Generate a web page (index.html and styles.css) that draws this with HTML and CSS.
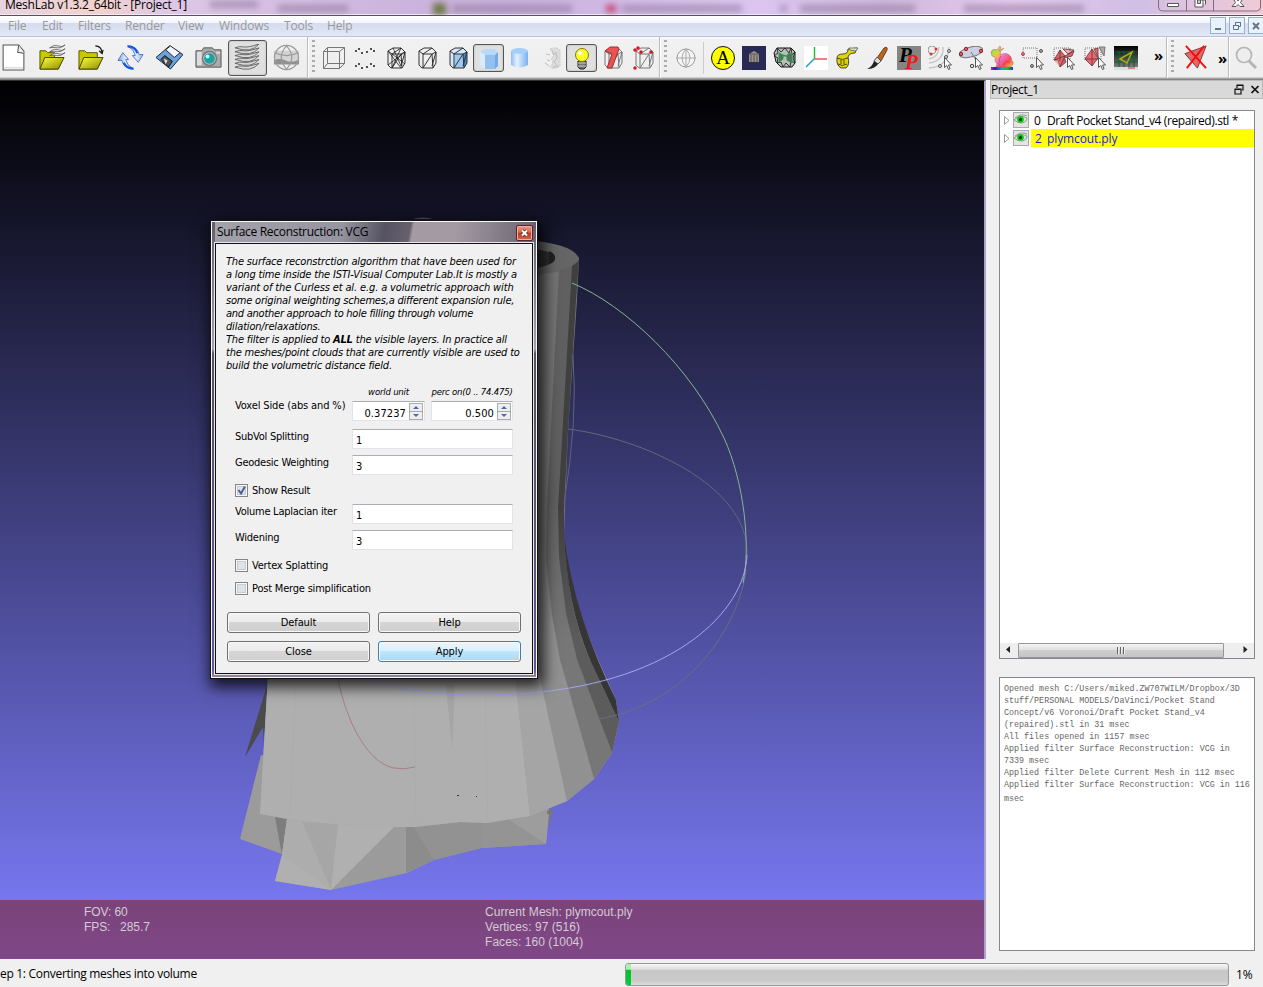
FILE: index.html
```html
<!DOCTYPE html>
<html lang="en">
<head>
<meta charset="utf-8">
<title>MeshLab</title>
<link rel="stylesheet" href="styles.css">
</head>
<body>
<svg class="defs" width="0" height="0">
  <defs>
    <linearGradient id="steel" x2="1"><stop offset="0" stop-color="#7ba6e6"/><stop offset=".5" stop-color="#e4efff"/><stop offset="1" stop-color="#9fc1ee"/></linearGradient>
    <linearGradient id="folder" x2="1" y2="1"><stop offset="0" stop-color="#ffff40"/><stop offset="1" stop-color="#8c8c00"/></linearGradient>
    <linearGradient id="cyl" x2="1"><stop offset="0" stop-color="#8dbdf5"/><stop offset=".35" stop-color="#e2f1ff"/><stop offset="1" stop-color="#7ab0ee"/></linearGradient>
    <linearGradient id="rainbow" x2="1" y2="1"><stop offset="0" stop-color="#35e45f"/><stop offset=".22" stop-color="#b6e040"/><stop offset=".36" stop-color="#f6c040"/><stop offset=".52" stop-color="#f070d0"/><stop offset=".75" stop-color="#ff4b4b"/><stop offset="1" stop-color="#f0e03b"/></linearGradient>
    <linearGradient id="spectrum" x2="1"><stop offset="0" stop-color="#e01090"/><stop offset=".2" stop-color="#2020e0"/><stop offset=".5" stop-color="#10b0c0"/><stop offset=".75" stop-color="#20c020"/><stop offset="1" stop-color="#2030d0"/></linearGradient>
    <symbol id="prism" viewBox="0 0 24 24"><path d="M4 5l5-3h8l4 4v11l-3 5H7l-3-3zM4 5l4 3h9l4-2M8 8v14M17 8l1 14M8 22l9-14M8 8l9-6M17 20l4-14" fill="none" stroke="currentColor"/></symbol>
    <symbol id="cursor" viewBox="0 0 8 13"><path d="M.5.5v10l2.300-2 1.700 4 1.600-.8-1.600-3.700h3z" fill="#fff" stroke="#444" stroke-width=".9"/></symbol>
    <symbol id="eye" viewBox="0 0 16 16"><rect x=".5" y=".5" width="15" height="15" fill="#e4e4e4" stroke="#aaa"/><path d="M2 6Q8 1 14 4M1 8q6-6 13-2 0 4-5 5-5 0-8-3z" fill="#c9efc9" stroke="#888" stroke-width=".8"/><circle cx="7.500" cy="7.500" r="3.300" fill="#08c808"/><circle cx="7.500" cy="7.500" r="1.500" fill="#052805"/></symbol>
  </defs>
</svg>
<div class="window">
  <header class="titlebar">
    <div class="smudges"><i class="s1"></i><i class="s2"></i><i class="s3"></i><i class="s4"></i><i class="s5"></i><i class="s6"></i><i class="s7"></i><i class="s8"></i><i class="s9"></i></div>
    <span class="title">MeshLab v1.3.2_64bit - [Project_1]</span>
    <div class="caption">
      <svg width="104" height="12" viewBox="0 0 104 12"><path d="M.5 0v7q0 4 4 4h94q4 0 4-4V0M28.500 0v11M55.500 0v11" fill="none" stroke="#806b80"/><path d="M9.500 3.500h11v3h-11z" fill="#fff" stroke="#555"/><path d="M38.500 -1h6.500v8h-8v-8M40 0h7.500v4.500M39.500 0v3.500h3V0" fill="#fff" stroke="#555"/><path d="M74 6.500l3.500-4-2-3.500h3l1.500 2 1.500-2h3l-2 3.500 3.500 4h-4l-2-2-2 2z" fill="#fff" stroke="#555"/></svg>
    </div>
  </header>
  <nav class="menubar">
    <span class="m1">File</span><span class="m2">Edit</span><span class="m3">Filters</span><span class="m4">Render</span><span class="m5">View</span><span class="m6">Windows</span><span class="m7">Tools</span><span class="m8">Help</span>
    <div class="mdi">
      <svg viewBox="0 0 17 18"><rect x=".5" y=".5" width="15" height="16"/><path d="M5 12h6" stroke-width="2"/></svg>
      <svg viewBox="0 0 17 18"><rect x=".5" y=".5" width="15" height="16"/><path d="M4.500 8.500h5v4h-5zM6.500 8V5.500h5v4H10M4 8.500h6M6 5.500h6"/></svg>
      <svg viewBox="0 0 17 18"><rect x=".5" y=".5" width="15" height="16"/><path d="M5 6l6 6M11 6l-6 6" stroke-width="2"/></svg>
    </div>
  </nav>
  <div class="toolbar">
    <div class="group wide">
      <div class="tool"><svg viewBox="0 0 26 26"><path d="M3 1h15l5 6v18H3z" fill="#fff" stroke="#555"/><path d="M18 1l-1 7 6 1" fill="#eee" stroke="#555"/><path d="M4 23h18" stroke="#ccc"/></svg></div>
      <div class="tool"><svg viewBox="0 0 28 28"><path d="M1 26V7h6l2 2h7v5h9L20 26z" fill="#c9c900" stroke="#555500"/><path d="M1 26l5-12h20l-6 12z" fill="url(#folder)" stroke="#444400"/><path d="M11 4q5-4 9-2t7-1q-5 4-8 3t-8 0zM11 8q5-4 9-2t7-1q-5 4-8 3t-8 0zM11 12q5-4 9-2t7-1q-5 4-8 3t-8 0z" fill="#eee" stroke="#555" stroke-width=".8"/></svg></div>
      <div class="tool"><svg viewBox="0 0 28 28"><path d="M1 26V7h6l2 2h11v5h5L20 26z" fill="#c9c900" stroke="#555500"/><path d="M1 26l5-12h20l-6 12z" fill="url(#folder)" stroke="#444400"/><path d="M18 2q6 0 7 7m-3-2l3 3 1-4" fill="none" stroke="#111" stroke-width="1.200"/></svg></div>
      <div class="tool"><svg viewBox="0 0 28 28"><path d="M11 2q10 0 12 9h4l-5 8-6-7h3q-1-6-8-10z" fill="url(#steel)" stroke="#345ab8" stroke-width=".8"/><path d="M17 26Q7 26 5 17H1l5-8 6 7H9q1 6 8 10z" fill="url(#steel)" stroke="#345ab8" stroke-width=".8"/><path d="M11 2.500q8 0 10 7M17 25.500q-7 0-10-6" stroke="#1454e8" stroke-width="2.200" fill="none"/></svg></div>
      <div class="tool"><svg viewBox="0 0 28 28"><path d="M0 14L14 2l14 9-13 15z" fill="#6ba3dd" stroke="#162440"/><path d="M10 6l5-4 10 7-6 5z" fill="#f5f5f5" stroke="#223"/><path d="M5 16l4-4 8 6-4 6z" fill="#555" stroke="#111"/><path d="M8 15l4 2-2 4z" fill="#ddd"/></svg></div>
      <div class="tool"><svg viewBox="0 0 28 28"><path d="M1 7h6l2-3h9l2 2h7v18H1z" fill="#aaa" stroke="#555"/><path d="M2 8h5v14H2zM22 8h4v2h-4z" fill="#ddd"/><circle cx="15" cy="15" r="8" fill="#777"/><circle cx="15" cy="15" r="6" fill="#1da0a0" stroke="#ccc"/><circle cx="13" cy="13" r="2" fill="#b9ffff"/></svg></div>
      <div class="tool pressed-lg"><svg viewBox="0 0 28 28"><g fill="#d8d8d8" stroke="#5a5a5a" stroke-width=".9"><path d="M1 24q5-2 9-1t16-3q-4 5-10 6t-15-2z"/><path d="M1 20q5-2 9-1t16-3q-4 5-10 6t-15-2z"/><path d="M1 16q5-2 9-1t16-3q-4 5-10 6t-15-2z"/><path d="M1 12q5-2 9-1t16-3q-4 5-10 6t-15-2z"/><path d="M1 8q5-2 9-1t16-3q-4 5-10 6t-15-2z"/><path d="M1 4q5-2 9-1t16-3q-4 5-10 6t-15-2z"/></g></svg></div>
      <div class="tool"><svg viewBox="0 0 28 28"><rect x="1" y="7" width="26" height="15" fill="#d3d3d3"/><path d="M1 17q5-3 12 0t14-1v5H1z" fill="#909090"/><circle cx="14" cy="14" r="12.500" fill="none" stroke="#999" stroke-width="1.200"/><path d="M14 2q-11 12 0 24M14 2q11 12 0 24M2 9q12 6 24 0" fill="none" stroke="#999" stroke-width="1.200"/></svg></div>
    </div>
    <span class="bar"></span><span class="grip"></span>
    <div class="group render">
      <div class="tool"><svg viewBox="0 0 24 24"><path d="M1.500 5.500h16v17h-16zM5.500 1.500h17v16h-17zM1.500 5.500l4-4M17.500 5.500l5-4M17.500 22.500l5-5M1.500 22.500l4-5" fill="none" stroke="#777"/></svg></div>
      <div class="tool"><svg viewBox="0 0 24 24"><path d="M3 5h0M6 3h0M9 7h0M14 6h0M18 3h0M21 5h0M3 20h0M6 18h0M9 22h0M14 21h0M18 18h0M21 20h0" stroke="#111" stroke-width="1.900" stroke-linecap="round"/></svg></div>
      <div class="tool dark"><svg viewBox="0 0 24 24"><use href="#prism"/><path d="M4 5l13 17M9 2l8 18M21 6L4 19M8 8l13 10M17 2L8 22" stroke="#222" stroke-width=".8"/></svg></div>
      <div class="tool dark"><svg><use href="#prism"/></svg></div>
      <div class="tool dark"><svg viewBox="0 0 24 24"><path d="M4 5l5-3h8l4 4v11l-3 5H7l-3-3z" fill="#d5e7fa"/><path d="M9 8h8l1 14H8z" fill="#9cc8f5"/><path d="M17 8l4-2v11l-3 5z" fill="#4787ca"/><use href="#prism"/></svg></div>
      <div class="tool pressed"><svg viewBox="0 0 24 24"><path d="M3 6l5-3h9l4 3-3 3H8z" fill="#b9d9fa"/><path d="M3 6l5 3v14l-5-4z" fill="#dcebfb"/><path d="M8 9h10v14H8z" fill="#91c0f1"/><path d="M18 9l3-3v14l-3 3z" fill="#6eabe9"/></svg></div>
      <div class="tool"><svg viewBox="0 0 24 24"><path d="M3 5v14q8 5 17 0V5z" fill="url(#cyl)"/><ellipse cx="11.500" cy="5" rx="8.500" ry="3" fill="#a5cef8"/></svg></div>
      <div class="tool"><svg viewBox="0 0 24 24"><path d="M11 3q8-3 10 2v15q-5 4-10 1 5-5 1-8 5-3-1-10" fill="#ddd" stroke="#c6c6c6" stroke-dasharray="2 1"/><path d="M13 4l2 5 2-3 1 6-3 4 4 4-5 1M6 17l4 3M7 8l4 1M8 14l3 1" fill="none" stroke="#bdbdbd"/></svg></div>
      <div class="tool pressed"><svg viewBox="0 0 24 24"><path d="M8 15h8v6l-2 2h-4l-2-2z" fill="#777" stroke="#222"/><path d="M8 17h8M8 20h8" stroke="#ccc"/><circle cx="12" cy="9" r="6.500" fill="#ffff21" stroke="#827c00"/><circle cx="10" cy="7" r="2" fill="#fff"/></svg></div>
      <div class="tool"><svg viewBox="0 0 24 24"><g color="#777"><use href="#prism"/></g><path d="M4 5l5-4h8l1 2-7 19H6l5-14z" fill="#ec5252" stroke="#9d3030"/></svg></div>
      <div class="tool"><svg viewBox="0 0 24 24"><g color="#777"><use href="#prism"/></g><path d="M3 4h0M6 2h0M9 6h0M19 6h0M3 22h0" stroke="#d61822" stroke-width="3.500" stroke-linecap="round"/></svg></div>
    </div>
    <span class="bar"></span><span class="grip"></span>
    <div class="group globe"><div class="tool"><svg viewBox="0 0 24 24"><circle cx="12" cy="12" r="9" fill="#f5f5f5" stroke="#999"/><path d="M12 2v20M2 12h20M12 3q-8 9 0 18M12 3q8 9 0 18" fill="none" stroke="#aaa"/></svg></div></div>
    <span class="thin"></span>
    <div class="group edit">
      <div class="tool"><svg viewBox="0 0 24 24"><circle cx="12" cy="12" r="11.500" fill="#ff0" stroke="#111"/><text x="12" y="18" text-anchor="middle" class="letter">A</text></svg></div>
      <div class="tool"><svg viewBox="0 0 24 24"><path d="M0 0h24v24H0z" fill="#292956"/><path d="M7 8l5-3 5 3v8H7z" fill="#999287"/><path d="M9 9v7M12 9v7M15 9v7M7 8h10" stroke="#555"/></svg></div>
      <div class="tool"><svg viewBox="0 0 24 24"><path d="M4 2l14 0 4 4v11l-3 4H8l-5-5L1 7z" fill="#bbb" stroke="#111"/><path d="M4 2l4 4 4-4 4 5 2-5 1 7 3-3-2 6 2 5-4-2-1 6-4-4-3 4-2-5-4 1 1-5-4-2 4-3z" fill="none" stroke="#222" stroke-width=".9"/><path d="M6 7v9l4-3v-3h4v4l5 3V7l-4 1-1 2-4-1z" fill="#666" stroke="#14a93b"/></svg></div>
      <div class="tool"><svg viewBox="0 0 24 24"><path d="M0 0h24v24H0z" fill="#fff"/><path d="M10.500 1v12" stroke="#22bd42" stroke-width="1.500"/><path d="M10 13h13" stroke="#f05454" stroke-width="1.500"/><path d="M10 13l-8 8" stroke="#199bdd" stroke-width="1.500"/></svg></div>
      <div class="tool"><svg viewBox="0 0 24 24"><path d="M2 12q0-4 6-4 5 0 5-5l9-1-2 5q-6 0-7 4 2 8-2 11H6q-5-3-4-10z" fill="#ded505" stroke="#222" stroke-width=".8"/><path d="M2 12q5 3 11 0M3 18q4 3 9 0M6 14v4M9 14v4" fill="none" stroke="#4c4800"/><path d="M14 2h9l-2 3-6-1z" fill="#ddd" stroke="#555" stroke-width=".7"/></svg></div>
      <div class="tool"><svg viewBox="0 0 24 24"><path d="M11 12L18 2q4-2 3 2l-6 11z" fill="#bd641f" stroke="#4b2410" stroke-width=".8"/><path d="M8 15l3-4 4 4-3 3z" fill="#ddd" stroke="#555"/><path d="M1 23q5-2 7-8l4 3q-3 5-11 5z" fill="#222"/></svg></div>
      <div class="tool"><svg viewBox="0 0 24 24"><path d="M0 0h24v24H0z" fill="#858585"/><text x="2" y="16" class="pp">P</text><text x="8" y="23" class="pp red">P</text></svg></div>
      <div class="tool"><svg viewBox="0 0 24 24"><path d="M1 17Q16 15 15 1M1 13q9-1 10-12M1 22q19-1 20-21" fill="none" stroke="#c2c2c2" stroke-width="1.300"/><circle cx="4" cy="4" r="4" fill="#eee" stroke="#999"/><path d="M8 3h0M3 8h0" stroke="#d23b3b" stroke-width="3" stroke-linecap="round"/><g fill="#ddd" stroke="#555"><circle cx="21" cy="5" r="1.500"/><circle cx="18" cy="11" r="1.500"/><circle cx="12" cy="20" r="1.500"/></g><use href="#cursor" x="16" y="11" width="8" height="13"/></svg></div>
      <div class="tool"><svg viewBox="0 0 24 24"><ellipse cx="12" cy="6" rx="12" ry="5" transform="rotate(-14 12 6)" fill="#ccd0e4" stroke="#777"/><path d="M12 6l5 8" stroke="#777"/><g fill="#e85b5b" stroke="#942020"><circle cx="2" cy="8" r="1.700"/><circle cx="7" cy="3" r="1.700"/><circle cx="22" cy="5" r="1.700"/></g><circle cx="13" cy="20" r="1.700" fill="#ddd" stroke="#444"/><use href="#cursor" x="16" y="11" width="8" height="13"/></svg></div>
      <div class="tool"><svg viewBox="0 0 24 24"><path d="M1 21h22v3H1z" fill="url(#spectrum)"/><path d="M1 6Q2 3 5 3.500L7 4 10 0l1 2-2 3 5-3-4 4q1 1 0 3 7-4 11 2l1 4q2 1 1 3l-2 3H6l1-3-2-3 0-4-3-1z" fill="url(#rainbow)" stroke="#a85c70" stroke-width=".5"/><path d="M11 10q-3 3-1 7M20 17q-4-4-7 2M8 17l2 3" fill="none" stroke="#a03b66" stroke-width=".6"/></svg></div>
      <div class="tool"><svg viewBox="0 0 24 24"><path d="M2 2h14v10H2z" fill="none" stroke="#777" stroke-dasharray="1 1"/><circle cx="2" cy="8" r="1.600" fill="#e46060" stroke="#a03030" stroke-width=".6"/><circle cx="20" cy="5" r="1.500" fill="#aaa" stroke="#555"/><circle cx="11" cy="20" r="1.500" fill="#aaa" stroke="#555"/><use href="#cursor" x="15" y="11" width="8" height="13"/></svg></div>
      <div class="tool"><svg viewBox="0 0 24 24"><path d="M2 2h16v12H2z" fill="none" stroke="#777" stroke-dasharray="1 1"/><path d="M2 14L8 4l5 6 9-5-2 5-8 2 2 4-6 5-2-7z" fill="#d9646a" stroke="#6c3033" stroke-width=".8"/><path d="M2 14l11-4-5 11M8 4v11M11 3l11 1-6 4z" fill="#df7074" fill-opacity=".5" stroke="#6c3033" stroke-width=".8"/><use href="#cursor" x="15" y="11" width="8" height="13"/></svg></div>
      <div class="tool"><svg viewBox="0 0 24 24"><path d="M2 2h16v12H2z" fill="none" stroke="#777" stroke-dasharray="1 1"/><path d="M2 13L9 3l6 9-6 8zM9 3v17M2 13h13M11 3l4-1v9z" fill="#e26b72" stroke="#6c3033" stroke-width=".8"/><path d="M16 1h6l-1 9z" fill="#aaa" stroke="#777"/><use href="#cursor" x="15" y="11" width="8" height="13"/></svg></div>
      <div class="tool"><svg viewBox="0 0 24 24"><defs><linearGradient id="night" y2="1" x2="0"><stop offset="0"/><stop offset="1" stop-color="#8a8a8a"/></linearGradient></defs><path d="M0 0h24v24H0z" fill="url(#night)"/><path d="M1 6h22M1 11h22M1 16h22M5 5v16M10 5v16M15 5v16M20 5v16" stroke="#08652e"/><path d="M6 13l12-7-5 11z" fill="none" stroke="#bba221" stroke-width="1.500"/><path d="M0 21h24v3H0z" fill="#ddd"/><path d="M14 22h7" stroke="#c73131"/></svg></div>
    </div>
    <span class="more m-a">»</span><span class="bar last"></span><span class="grip"></span>
    <div class="group del"><div class="tool"><svg viewBox="0 0 26 26"><path d="M2 9l22-8-9 23z" fill="#e56969" stroke="#843333"/><path d="M3 1l21 23M22 1L4 24" stroke="#f20d0d" stroke-width="2"/></svg></div></div>
    <span class="more m-b">»</span><span class="bar"></span>
    <div class="group find"><div class="tool"><svg viewBox="0 0 24 24"><circle cx="10" cy="9" r="7.500" fill="#eee" stroke="#b5b5b5" stroke-width="1.700"/><path d="M15 15l7 7" stroke="#b5b5b5" stroke-width="3"/></svg></div></div>
  </div>

  <main class="work">
    <section class="viewport">
      <svg class="scene" viewBox="0 81 984 878">
        <defs><linearGradient id="sky" x2="0" y2="1"><stop offset="0" stop-color="#000"/><stop offset="1" stop-color="#7f7fff"/></linearGradient>
        <linearGradient id="neck" gradientUnits="userSpaceOnUse" x1="0" y1="250" x2="0" y2="690"><stop offset="0" stop-color="#727272"/><stop offset=".65" stop-color="#797979"/><stop offset="1" stop-color="#a0a0a0"/></linearGradient>
        <linearGradient id="band1" gradientUnits="userSpaceOnUse" x1="0" y1="500" x2="0" y2="640"><stop offset="0" stop-color="#606060"/><stop offset="1" stop-color="#777"/></linearGradient>
        <linearGradient id="band2" gradientUnits="userSpaceOnUse" x1="0" y1="510" x2="0" y2="640"><stop offset="0" stop-color="#404040"/><stop offset="1" stop-color="#5c5c5c"/></linearGradient></defs>
        <path d="M0 81h984v878H0z" fill="url(#sky)"/>
        <path d="M413 219q10-3 20 0z" fill="#555"/>
        <path d="M268 682L245 757l18-30 2 33z" fill="#4b4b4b"/>
        <path d="M261 755l-21 84 42 15-7 27 56 9 76-17 27-13 47-12 65-4 3-35z" fill="#9b9b9b"/>
        <path d="M275 817l7 38 5-36z" fill="#7d7d7d"/>
        <path d="M547 811l1 18 5-20z" fill="#777"/>
        <path d="M287 819l-5 36-7 26 56 9 63-63z" fill="#b0b0b0"/>
        <path d="M302 821l-15-2-5 36 49 35z" fill="#adadad"/>
        <path d="M302 821l29 69 7-66z" fill="#a6a6a6"/>
        <path d="M406 825v48l28-13-20-34z" fill="#8c8c8c"/>
        <path d="M413 826l21 34 30-39zM464 820l-30 40 48-12v-26z" fill="#929292"/>
        <path d="M482 822v26l64-4-38-25z" fill="#949494"/>
        <path d="M508 819l38 25 3-30z" fill="#9d9d9d"/>
        <path d="M525 240Q570 244 579 258L577 300 568 430 564 535Q568 590 600 664L616 700 619 722 612 753 594 779 567 801 530 816 487 823 460 822 415 827 365 827 300 821 260 814 268 675H520z" fill="url(#neck)"/>
        <path d="M268 675h247l15 141-43 7-27-1-45 5-50 0-65-6-40-7z" fill="#afafaf"/>
        <path d="M515 675h24l28 126-37 15z" fill="#a5a5a5"/>
        <path d="M552 615L560 660 594 779 567 801 542 687 538 650z" fill="#919191"/>
        <path d="M547 505l-1 55 6 55 8 45 34 119 18-26-35-93-10-47-7-56-1-52z" fill="url(#band1)"/>
        <path d="M559 270l14-5-14 245-12-5z" fill="#606060"/>
        <path d="M558 505l1 52 7 56 11 47 35 93 7-31-29-62q-22-50-26-125v-30z" fill="url(#band2)"/>
        <path d="M564 535q3 70 26 125l29 62-3-22q-42-85-52-165z" fill="#363636"/>
        <path d="M572 266l7-7-3 42-8 130-4 80-6-2z" fill="#404040"/>
        <path d="M525 240Q577 244 579 260 570 272 530 276z" fill="#656565"/>
        <path d="M530 249q23 1 25 9-1 8-25 11z" fill="#303030"/><path d="M549 251q7 3 6 8-1 4-6 5z" fill="#222"/>
        <path d="M296 683l-6 131M414 683l2 140M485 683l3 140" fill="none" stroke="#acacac"/><path d="M446 685h9l-3 64z" fill="#a5a5a5"/>
        <path d="M457 795.500h2M476 796.500h1" stroke="#333"/>
        <g fill="none" stroke-width="1">
          <path d="M573 355Q578 420 564 503" stroke="#616178"/>
          <path d="M568 429C640 438 750 485 747 555" stroke="#65657b"/>
          <path d="M598 719C690 704 739 625 746 570" stroke="#686e80"/>
          <path d="M572 283C625 305 691 367 724 438C744 482 751 545 743 583" stroke="#86b590"/>
          <path d="M747 555C745 611 675 681 530 693C475 697 420 696 370 681" stroke="#a5a5ee"/>
          <path d="M338 679C346 720 367 763 394 768q10 2 21-1" stroke="#a87f80"/>
        </g>
      </svg>
      <div class="hud">
        <pre class="fov">FOV: 60
FPS:   285.7</pre>
        <pre class="mesh"><span class="h1">Current Mesh: plymcout.ply</span>
Vertices: 97 (516)
Faces: 160 (1004)</pre>
      </div>
      <section class="dialog">
        <div class="dlg-title"><span>Surface Reconstruction: VCG</span><b><svg viewBox="0 0 15 14"><path d="M5 4.500l5 5M10 4.500l-5 5" stroke="#533" stroke-width="3.600"/><path d="M5 4.500l5 5M10 4.500l-5 5" stroke="#fff" stroke-width="2"/></svg></b></div>
        <div class="dlg-body">
          <p class="desc"><span class="d1">The surface reconstrction algorithm that have been used for</span><span class="d2">a long time inside the ISTI-Visual Computer Lab.It is mostly a</span><span class="d3">variant of the Curless et al. e.g. a volumetric approach with</span><span class="d4">some original weighting schemes,a different expansion rule,</span><span class="d5">and another approach to hole filling through volume</span><span class="d6">dilation/relaxations.</span><span class="d7">The filter is applied to <b>ALL</b> the visible layers. In practice all</span><span class="d8">the meshes/point clouds that are currently visible are used to</span><span class="d9">build the volumetric distance field.</span></p>
          <div class="voxel">
            <label>Voxel Side (abs and %)</label>
            <div class="spin s-abs"><em>world unit</em><div class="box">0.37237<i></i></div></div>
            <div class="spin s-pc"><em>perc on(0 .. 74.475)</em><div class="box">0.500<i></i></div></div>
          </div>
          <div class="row"><label>SubVol Splitting</label><div class="box">1</div></div>
          <div class="row"><label>Geodesic Weighting</label><div class="box">3</div></div>
          <div class="check c1"><svg viewBox="0 0 13 13"><rect class="cb" x=".5" y=".5" width="12" height="12"/><rect class="ci" x="2.500" y="2.500" width="8" height="8"/><path d="M3.500 6l2.500 3.500 4-7" fill="none" stroke="#4b5d9b" stroke-width="2"/></svg>Show Result</div>
          <div class="row"><label>Volume Laplacian iter</label><div class="box">1</div></div>
          <div class="row"><label>Widening</label><div class="box">3</div></div>
          <div class="check c2"><svg viewBox="0 0 13 13"><rect class="cb" x=".5" y=".5" width="12" height="12"/><rect class="ci" x="2.500" y="2.500" width="8" height="8"/></svg>Vertex Splatting</div>
          <div class="check c3"><svg viewBox="0 0 13 13"><rect class="cb" x=".5" y=".5" width="12" height="12"/><rect class="ci" x="2.500" y="2.500" width="8" height="8"/></svg>Post Merge simplification</div>
          <div class="buttons"><button>Default</button><button>Help</button><button>Close</button><button class="hot">Apply</button></div>
        </div>
      </section>
    </section>
    <aside class="dock">
      <div class="dock-title"><span>Project_1</span><svg width="26" height="12" viewBox="0 0 26 12"><path d="M1 5h6v5H1zM3 4V1h6v5H8M1 5.500h6M3 1.500h6" fill="none" stroke="#111" stroke-width="1.200"/><path d="M17.500 2l7 7M24.500 2l-7 7" stroke="#111" stroke-width="1.700"/></svg></div>
      <div class="tree">
        <div class="layer"><svg class="arrow" viewBox="0 0 6 9"><path d="M.5.500l4.500 4-4.500 4z" fill="#fff" stroke="#999"/></svg><svg class="eye"><use href="#eye"/></svg><span class="num">0</span><span class="l1">Draft Pocket Stand_v4 (repaired).stl *</span></div>
        <div class="layer cur"><svg class="arrow" viewBox="0 0 6 9"><path d="M.5.500l4.500 4-4.500 4z" fill="#fff" stroke="#999"/></svg><svg class="eye"><use href="#eye"/></svg><div class="hl"><span class="num">2</span><span class="l2">plymcout.ply</span></div></div>
        <div class="hscroll"><svg width="18" height="15" viewBox="0 0 18 15"><path d="M10 3v7L6 6.500z" fill="#222"/></svg><div class="thumb"><i></i><i></i><i></i></div><svg width="18" height="15" viewBox="0 0 18 15"><path d="M7.500 3v7l4-3.500z" fill="#222"/></svg></div>
      </div>
      <pre class="log">Opened mesh C:/Users/miked.ZW707WILM/Dropbox/3D
stuff/PERSONAL MODELS/DaVinci/Pocket Stand
Concept/v6 Voronoi/Draft Pocket Stand_v4
(repaired).stl in 31 msec
All files opened in 1157 msec
Applied filter Surface Reconstruction: VCG in
7339 msec
Applied filter Delete Current Mesh in 112 msec
Applied filter Surface Reconstruction: VCG in 116
<span>msec</span></pre>
    </aside>
  </main>
  <footer class="status"><span class="step">ep 1: Converting meshes into volume</span><div class="progress"><i></i></div><span class="pct">1%</span></footer>
</div>
</body>
</html>
```
FILE: styles.css
```css
* { box-sizing: border-box; }
body { margin: 0; width: 1263px; height: 987px; overflow: hidden; background: #f0f0f0; font-family: "Open Sans", "Noto Sans", sans-serif; font-size: 12px; color: #000; }
svg { display: block; }
.defs { position: absolute; }
.window { width: 1263px; height: 987px; display: flex; flex-direction: column; }
.titlebar { height: 16px; flex: none; position: relative; overflow: hidden; display: flex; justify-content: space-between; background: linear-gradient(90deg, #e8d3df 0, #f2d2cb 8%, #dfc7e6 13%, #ceb5de 30%, #c9b0dc 40%, #dcc6f0 60%, #cfb7dd 70%, #e5c9ed 80%, #d0bee5 90%, #f0cbd5 100%); border-bottom: 1px solid #56525b; box-shadow: inset 0 -1px #f0e9f3; }
.smudges { position: absolute; inset: 0; filter: blur(3px); }
.smudges i { position: absolute; top: 5px; height: 7px; background: #8b7498; opacity: .6; }
.smudges .s1 { left: 210px; width: 48px; top: 1px; }
.s2 { left: 278px; width: 70px; }
.smudges .s3 { left: 433px; width: 13px; height: 12px; top: 3px; background: #657238; opacity: .9; }
.s4 { left: 452px; width: 120px; }
.smudges .s5 { left: 606px; width: 10px; background: #bc3459; opacity: .9; }
.s6 { left: 622px; width: 120px; }
.s7 { left: 780px; width: 7px; }
.s8 { left: 800px; width: 115px; }
.s9 { left: 964px; width: 120px; }
.title { position: relative; margin: -3px 0 0 5px; line-height: 16px; letter-spacing: -.23px; white-space: nowrap; }
.caption { position: relative; margin-right: 1px; }
.menubar { height: 21px; flex: none; display: flex; background: linear-gradient(#fff 0, #f3f5fb 7px, #d5dcef 7px, #e1e7f6 20px); border-bottom: 1px solid #b7c1d8; line-height: 20px; color: #999; padding-left: 8px; letter-spacing: -.15px; white-space: nowrap; }
.m1 { width: 34px; } .m2 { width: 36px; } .m3 { width: 47px; } .m4 { width: 53px; } .m5 { width: 41px; } .m6 { width: 65px; } .m7 { width: 43px; }
.mdi { display: flex; margin-left: auto; gap: 2px; padding-top: 1px; margin-right: -2px; }
.mdi svg { width: 17px; height: 18px; fill: #e9f2fb; stroke: #61768b; }
.mdi rect { stroke: #96b2c9; }
.toolbar { height: 43px; flex: none; display: flex; align-items: center; background: linear-gradient(#fff 0, #f1f1f1 2px, #eee 40px, #b0b0b0 41px, #777 43px); overflow: hidden; padding-bottom: 2px; }
.group { display: flex; flex: none; }
.tool { display: flex; align-items: center; justify-content: center; width: 31px; height: 28px; }
.tool svg { width: 24px; height: 24px; }
.wide { margin-left: -6px; }
.wide .tool { width: 39px; height: 36px; }
.wide .tool svg { width: 27px; height: 27px; margin-right: 1px; }
.tool.pressed, .tool.pressed-lg { border: 1px solid #555; border-radius: 3px; background: #e0e0e0; box-shadow: inset 0 0 2px #aaa; }
.dark { color: #333; }
.bar { width: 2px; height: 41px; border-left: 1px solid #bbb; border-right: 1px solid #fff; flex: none; }
.thin { width: 1px; height: 32px; background: #ccc; margin: 0 3px 0 2px; }
.grip { width: 3px; height: 35px; margin: 0 3px; flex: none; background: repeating-linear-gradient(#aaa 0 2px, transparent 2px 5px); }
.wide + .bar { margin-left: 1px; }
.letter { font: 19px "Liberation Serif", serif; }
.pp { font: italic bold 21px "Liberation Serif", serif; }
.red { fill: #f01818; }
.more { font: bold 15px/20px "Open Sans", sans-serif; width: 10px; }
.m-a { margin: -6px 0 0 13px; }
.m-b { margin: 0 0 0 7px; }
.last { margin-left: 2px; }
.del { margin-left: 3px; }
.del .tool svg { width: 25px; height: 25px; }
.work { height: 879px; flex: none; display: flex; }
.viewport { width: 986px; height: 879px; position: relative; border-right: 2px solid #aaa2c7; border-bottom: 1px solid #b495b7; border-top: 1px solid #333; flex: none; }
.scene { width: 984px; height: 878px; }
.hud { position: absolute; left: 0; top: 819px; width: 984px; height: 59px; background: linear-gradient(#7a4379, #804788); color: #d3cbd4; font: 12px/15px "Liberation Sans", Arial, sans-serif; }
.hud pre { position: absolute; margin: 0; top: 5px; font: inherit; letter-spacing: .06px; }
.hud .fov { left: 84px; letter-spacing: -.08px; }
.mesh { left: 485px; }
.dialog { position: absolute; left: 210px; top: 139px; width: 328px; height: 459px; border: 1px solid #111; background: linear-gradient(#625d6c, #a6a0ac 28%, #5a5060 29%, #5f578b 98%, #9b8f9b); box-shadow: inset 0 0 0 1px #f8f8fa, 3px 5px 14px 3px #000c; display: flex; flex-direction: column; padding: 1px 4px 4px; }
.dlg-title { height: 21px; display: flex; justify-content: space-between; padding: 1px 0 0 2px; line-height: 17px; font-size: 12px; letter-spacing: -.3px; background: linear-gradient(100deg, #a3a1aa 0, #9694a0 40%, #555262 53%, #68616d 61%, #a49aa4 62%, #a49aa4 75%, #6b6672 100%); }
.dlg-title b { width: 17px; height: 16px; margin-top: 2px; border: 1px solid #64202a; border-radius: 2px; background: linear-gradient(#e69884, #d86b50 45%, #b83a22 50%, #d6674a); box-shadow: inset 0 0 0 1px #edb0a1; }
.dlg-body { height: 431px; border: 1px solid #111; outline: 1px solid #e8e8ef; background: #f0f0f0; padding: 11px 11px; display: flex; flex-direction: column; font: 11px "DejaVu Sans Condensed", "DejaVu Sans", sans-serif; letter-spacing: -.25px; }
.desc { margin: 0; height: 117px; font-style: italic; line-height: 13px; white-space: nowrap; margin-left: -1px; letter-spacing: -.18px; flex: none; }
.desc > span { display: block; width: max-content; }
.d1 { letter-spacing: -.17px; }
.d3 { letter-spacing: -.13px; }
.d4 { letter-spacing: -.2px; }
.d5 { letter-spacing: -.25px; }
.d8 { letter-spacing: -.2px; }
.voxel { display: flex; margin: 10px 0 3px 7px; height: 41px; flex: none; }
.voxel label { width: 118px; padding: 17px 0 0 1px; white-space: nowrap; letter-spacing: -.13px; }
.spin em { display: block; height: 18px; font-size: 9.500px; line-height: 19px; text-align: center; white-space: nowrap; letter-spacing: -.2px; }
.s-abs { width: 73px; margin-right: 6px; }
.s-pc { width: 82px; }
.box { position: relative; background: #fff; border: 1px solid #e2e3ea; border-top-color: #abadb3; border-radius: 1px; height: 20px; line-height: 21px; padding-left: 3px; }
.spin .box { text-align: right; padding: 1px 18px 0 0; margin-top: 1px; letter-spacing: .1px; }
.box i { position: absolute; right: 1px; top: 1px; width: 14px; height: 17px; border: 1px solid #aaa; background: linear-gradient(#eee 7px, #aaa 7px 8px, #eee 8px); }
.box i::before, .box i::after { content: ""; position: absolute; left: 3px; border: 3px solid transparent; }
.box i::before { top: -1px; border-bottom-color: #5367a9; }
.box i::after { bottom: -1px; border-top-color: #5367a9; }
.row { display: flex; height: 26px; margin-left: 7px; padding-top: 3px; flex: none; }
.row label { width: 118px; line-height: 15px; padding-left: 1px; }
.row .box { width: 161px; }
.check { display: flex; gap: 4px; height: 23px; align-items: center; margin-left: 8px; flex: none; letter-spacing: -.2px; }
.check svg { width: 13px; height: 13px; }
.c1 { padding-top: 2px; }
.c2 { margin-top: 1px; }
.cb { fill: #f8f8f8; stroke: #858585; }
.ci { fill: #dfe2e6; stroke: #c5cbd2; }
.buttons { display: grid; grid-template-columns: 143px 143px; gap: 8px; margin-top: 12px; }
button { height: 21px; padding: 0; border: 1px solid #707070; border-radius: 3px; font: inherit; letter-spacing: -.1px; color: #000; background: linear-gradient(#f2f2f2, #ebebeb 48%, #d5d5d5 50%, #cfcfcf); box-shadow: inset 0 0 0 1px #f8f8f8; }
.hot { border-color: #3c7fb1; background: linear-gradient(#eaf6fd, #d9f0fc 48%, #bee6fd 50%, #a7d9f5); }
.dock { padding-left: 4px; width: 277px; }
.dock-title { height: 19px; background: #d9d9d9; border: 1px solid #bbb; display: flex; justify-content: space-between; align-items: center; padding: 0 2px 0 0; letter-spacing: -.4px; }
.tree { margin: 11px 8px 0 9px; border: 1px solid #828790; background: #fff; height: 549px; display: flex; flex-direction: column; padding-top: 0; }
.layer { height: 18px; display: flex; align-items: center; padding-left: 4px; white-space: nowrap; line-height: 20px; }
.arrow { width: 6px; height: 9px; margin-right: 3px; }
.eye { width: 16px; height: 16px; margin-right: 6px; }
.layer .num { width: 12px; display: inline-block; }
.layer > .num { margin-left: -1px; width: 13px; }
.layer > span { padding-top: 2px; }
.l1 { letter-spacing: -.41px; }
.l2 { letter-spacing: -.1px; }
.hl { background: #ff0; color: #1a1ae0; height: 18px; flex: 1; margin-left: -4px; padding-left: 4px; line-height: 19px; }
.hscroll { height: 15px; margin-top: auto; background: #eee; display: flex; }
.thumb { flex: 1; border: 1px solid #979797; border-radius: 1px; background: linear-gradient(#f3f3f3, #dfdfdf 49%, #cfcfcf 50%, #c4c4c4); display: flex; gap: 1px; justify-content: center; align-items: center; margin-right: 12px; }
.thumb i { width: 2px; height: 7px; background: #666; border-right: 1px solid #eee; }
.log { height: 274px; margin: 18px 8px 0 9px; border: 1px solid #828790; background: #fff; color: #666; padding: 5px 4px; font: 8.370px/12px "Liberation Mono", "Courier New", monospace; overflow: hidden; }
.log span { position: relative; top: 2px; }
.status { flex: 1; display: flex; align-items: center; padding-top: 3px; white-space: nowrap; line-height: 16px; }
.step { width: 625px; letter-spacing: -.3px; margin-top: -1px; }
.progress { width: 604px; height: 23px; border: 1px solid #999; border-radius: 3px; background: linear-gradient(#f8f8f8, #dedede 25%, #c7c7c7 30%, #cacaca 80%, #ddd); overflow: hidden; }
.progress i { display: block; width: 5px; height: 100%; background: linear-gradient(#a9f1b3 25%, #02c229 30%, #00cf34); }
.pct { margin-left: 7px; }
```
